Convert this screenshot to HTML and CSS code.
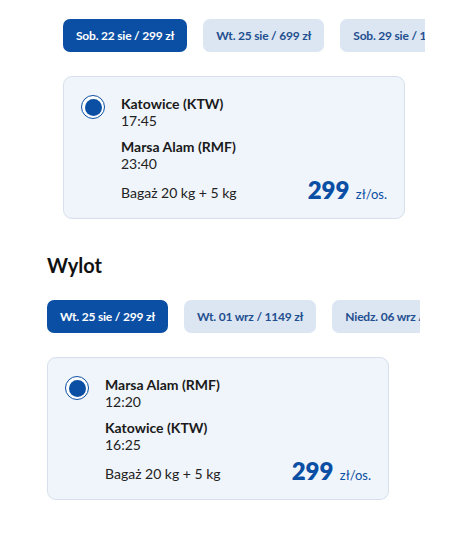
FILE: index.html
```html
<!DOCTYPE html>
<html lang="pl">
<head>
<meta charset="utf-8">
<link rel="stylesheet" href="styles.css">
</head>
<body>
<div class="page">
  <section class="leg leg-return">
    <div class="dates dates-return">
      <button class="tab tab-active">Sob. 22 sie / 299 zł</button>
      <button class="tab">Wt. 25 sie / 699 zł</button>
      <button class="tab">Sob. 29 sie / 1149 zł</button>
    </div>
    <div class="card">
      <span class="radio"><span class="radio-dot"></span></span>
      <div class="info">
        <div class="stop">
          <div class="city">Katowice (KTW)</div>
          <div class="time">17:45</div>
        </div>
        <div class="stop">
          <div class="city">Marsa Alam (RMF)</div>
          <div class="time">23:40</div>
        </div>
        <div class="foot">
          <span class="bag">Bagaż 20 kg + 5 kg</span>
          <span class="price"><b>299</b> zł/os.</span>
        </div>
      </div>
    </div>
  </section>

  <section class="leg leg-out">
    <h2 class="title">Wylot</h2>
    <div class="dates dates-out">
      <button class="tab tab-active">Wt. 25 sie / 299 zł</button>
      <button class="tab">Wt. 01 wrz / 1149 zł</button>
      <button class="tab">Niedz. 06 wrz / 1299 zł</button>
    </div>
    <div class="card">
      <span class="radio"><span class="radio-dot"></span></span>
      <div class="info">
        <div class="stop">
          <div class="city">Marsa Alam (RMF)</div>
          <div class="time">12:20</div>
        </div>
        <div class="stop">
          <div class="city">Katowice (KTW)</div>
          <div class="time">16:25</div>
        </div>
        <div class="foot">
          <span class="bag">Bagaż 20 kg + 5 kg</span>
          <span class="price"><b>299</b> zł/os.</span>
        </div>
      </div>
    </div>
  </section>
</div>
</body>
</html>
```
FILE: styles.css
```css
* { box-sizing: border-box; }
html, body { margin: 0; padding: 0; background: #fff; }
body { font-family: Lato, "Open Sans", Arial, sans-serif; color: #1c1c1c; }

.page { padding-top: 19px; }

.leg-return { margin-left: 63px; }
.leg-out { margin-left: 47px; margin-top: 34px; }

.title {
  margin: 0 0 23px;
  font-size: 20px;
  line-height: 24px;
  font-weight: 700;
  color: #111;
}

.dates {
  display: flex;
  gap: 16px;
  overflow: hidden;
  margin-bottom: 24px;
}
.dates-return { width: 362px; }
.dates-out { width: 373px; }

.tab {
  flex: none;
  height: 33px;
  padding: 0 13px;
  border: 0;
  border-radius: 7px;
  background: #dce6f3;
  color: #1f4f8f;
  font-family: Lato, Arial, sans-serif;
  font-size: 12px;
  font-weight: 700;
  letter-spacing: -0.2px;
  white-space: nowrap;
}
.tab-active { background: #0b4fa4; color: #fff; }

.card {
  display: flex;
  align-items: flex-start;
  gap: 16px;
  width: 342px;
  height: 143px;
  padding: 18px 17px 0 17px;
  background: #f0f5fb;
  border: 1px solid #d6e0ec;
  border-radius: 9px;
}

.radio {
  flex: none;
  width: 24px;
  height: 24px;
  border: 1.5px solid #0b4fa4;
  border-radius: 50%;
  background: #fff;
  display: flex;
  align-items: center;
  justify-content: center;
}
.radio-dot {
  width: 17px;
  height: 17px;
  border-radius: 50%;
  background: #0b4fa4;
}

.info { flex: 1; font-size: 14px; line-height: 17px; }
.stop + .stop { margin-top: 9px; }
.city { font-weight: 700; color: #1a1a1a; }
.time { color: #222; }

.foot {
  display: flex;
  justify-content: space-between;
  align-items: center;
  margin-top: 9px;
}
.bag { color: #222; }
.price { color: #0b4fa4; font-size: 13px; }
.price b { font-size: 24px; font-weight: 800; margin-right: 3px; }
```
